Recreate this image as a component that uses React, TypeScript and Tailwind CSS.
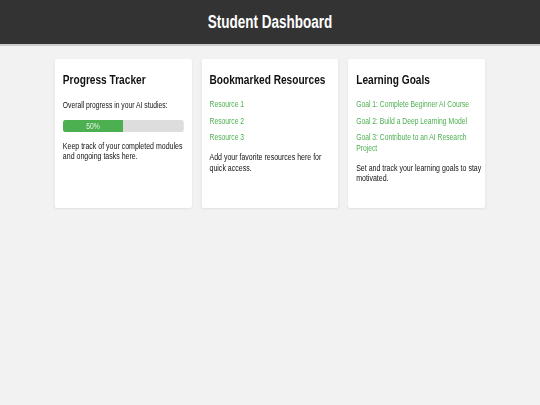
import React from "react";

const font = { fontFamily: '"Liberation Sans", Arial, sans-serif' };

function Card({ children }: { children: React.ReactNode }) {
  return (
    <section className="flex-1 h-[149px] bg-white rounded-[3px] shadow-[0_1px_3px_rgba(0,0,0,0.07)] pl-[10.5px] pr-[3px] pt-[13px]">
      {children}
    </section>
  );
}

function Title({ children }: { children: React.ReactNode }) {
  return <h2 className="text-[13.5px] font-bold text-[#111111] leading-[16px] whitespace-nowrap">{children}</h2>;
}

export default function App() {
  return (
    <div className="w-[540px] min-h-[405px] overflow-hidden bg-[#f2f2f2]" style={font}>
      <div className="w-[720px] min-h-[405px] origin-top-left scale-x-75">
        <header className="h-[46px] bg-[#333333] border-b-2 border-[#cccccc] flex items-center justify-center">
          <h1 className="text-white text-[18px] font-bold leading-none">Student Dashboard</h1>
        </header>
        <main className="flex gap-[13.3px] px-[73.3px] pt-[13px]">
          <Card>
            <Title>Progress Tracker</Title>
            <p className="mt-[11.5px] text-[9px] leading-[10.5px] text-[#111111]">Overall progress in your AI studies:</p>
            <div className="mt-[10px] mr-[8px] h-[12px] rounded-[3px] bg-[#dddddd] overflow-hidden">
              <div className="h-full w-1/2 bg-[#4caf50] flex items-center justify-center text-[9px] text-[#e6f4e6] leading-none">50%</div>
            </div>
            <p className="mt-[8.5px] text-[9.35px] leading-[10.6px] text-[#111111]">Keep track of your completed modules and ongoing tasks here.</p>
          </Card>
          <Card>
            <Title>Bookmarked Resources</Title>
            <ul className="mt-[11px] text-[9px] leading-[10.5px] text-[#4caf50] flex flex-col gap-[6.2px]">
              <li>Resource 1</li>
              <li>Resource 2</li>
              <li>Resource 3</li>
            </ul>
            <p className="mt-[9.5px] text-[9.35px] leading-[10.6px] text-[#111111]">Add your favorite resources here for quick access.</p>
          </Card>
          <Card>
            <Title>Learning Goals</Title>
            <ul className="mt-[11px] text-[9px] leading-[10.5px] text-[#4caf50] flex flex-col gap-[6.2px]">
              <li>Goal 1: Complete Beginner AI Course</li>
              <li>Goal 2: Build a Deep Learning Model</li>
              <li>Goal 3: Contribute to an AI Research Project</li>
            </ul>
            <p className="mt-[9.5px] text-[9.35px] leading-[10.6px] text-[#111111]">Set and track your learning goals to stay motivated.</p>
          </Card>
        </main>
      </div>
    </div>
  );
}
